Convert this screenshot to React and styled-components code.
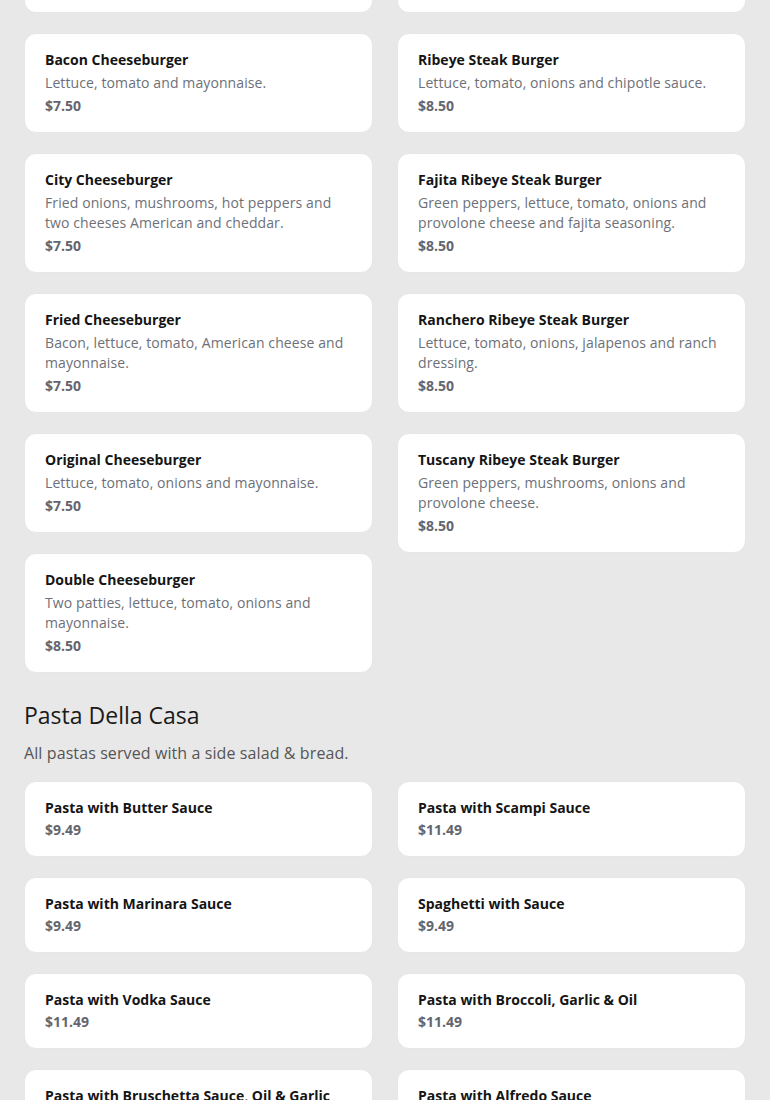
import React from 'react'
import styled, { createGlobalStyle } from 'styled-components'

const GlobalStyle = createGlobalStyle`
  html, body {
    margin: 0;
    padding: 0;
    background: #e8e8e8;
  }
  body {
    font-family: "Open Sans", "Liberation Sans", sans-serif;
    color: #1a1a1a;
  }
`

const Page = styled.div`
  padding: 0 24px 40px;
`

const Section = styled.section`
  margin-bottom: 26px;
`

const Heading = styled.h2`
  margin: 0;
  font-size: 23px;
  line-height: 32px;
  font-weight: 400;
  color: #1a1a1a;
`

const Subtitle = styled.p`
  margin: 10px 0 16px;
  font-size: 16px;
  line-height: 24px;
  letter-spacing: 0.1px;
  color: #555;
`

const Columns = styled.div`
  display: grid;
  grid-template-columns: 1fr 1fr;
  column-gap: 24px;
  align-items: start;
`

const Column = styled.div`
  display: flex;
  flex-direction: column;
  gap: 20px;
`

const Card = styled.div`
  background: #fff;
  border: 1px solid #e6e6e6;
  border-radius: 12px;
  padding: 16px 20px 16px;
  box-sizing: border-box;
`

/* bottom edge of the card above the visible part of the menu */
const CardEdge = styled.div`
  box-sizing: border-box;
  height: 13px;
  background: #fff;
  border: 1px solid #e6e6e6;
  border-top: none;
  border-radius: 0 0 12px 12px;
`

const Title = styled.div`
  font-size: 14px;
  line-height: 20px;
  font-weight: 700;
  color: #151515;
`

const Desc = styled.div`
  margin-top: 3px;
  font-size: 14px;
  line-height: 20px;
  letter-spacing: 0.1px;
  color: #6d7078;
`

const Price = styled.div`
  margin-top: ${p => (p.$tight ? 2 : 3)}px;
  font-size: 14px;
  line-height: 20px;
  font-weight: 700;
  color: #63666e;
`

const burgersLeft = [
  { name: 'Bacon Cheeseburger', desc: 'Lettuce, tomato and mayonnaise.', price: '$7.50' },
  { name: 'City Cheeseburger', desc: 'Fried onions, mushrooms, hot peppers and two cheeses American and cheddar.', price: '$7.50' },
  { name: 'Fried Cheeseburger', desc: 'Bacon, lettuce, tomato, American cheese and mayonnaise.', price: '$7.50' },
  { name: 'Original Cheeseburger', desc: 'Lettuce, tomato, onions and mayonnaise.', price: '$7.50' },
  { name: 'Double Cheeseburger', desc: 'Two patties, lettuce, tomato, onions and mayonnaise.', price: '$8.50' },
]

const burgersRight = [
  { name: 'Ribeye Steak Burger', desc: 'Lettuce, tomato, onions and chipotle sauce.', price: '$8.50' },
  { name: 'Fajita Ribeye Steak Burger', desc: 'Green peppers, lettuce, tomato, onions and provolone cheese and fajita seasoning.', price: '$8.50' },
  { name: 'Ranchero Ribeye Steak Burger', desc: 'Lettuce, tomato, onions, jalapenos and ranch dressing.', price: '$8.50' },
  { name: 'Tuscany Ribeye Steak Burger', desc: 'Green peppers, mushrooms, onions and provolone cheese.', price: '$8.50' },
]

const pastaLeft = [
  { name: 'Pasta with Butter Sauce', price: '$9.49' },
  { name: 'Pasta with Marinara Sauce', price: '$9.49' },
  { name: 'Pasta with Vodka Sauce', price: '$11.49' },
  { name: 'Pasta with Bruschetta Sauce, Oil & Garlic', price: '$11.49' },
]

const pastaRight = [
  { name: 'Pasta with Scampi Sauce', price: '$11.49' },
  { name: 'Spaghetti with Sauce', price: '$9.49' },
  { name: 'Pasta with Broccoli, Garlic & Oil', price: '$11.49' },
  { name: 'Pasta with Alfredo Sauce', price: '$11.49' },
]

const MenuCard = ({ item }) => (
  <Card>
    <Title>{item.name}</Title>
    {item.desc && <Desc>{item.desc}</Desc>}
    <Price $tight={!item.desc}>{item.price}</Price>
  </Card>
)

const App = () => {
  return (
    <>
      <GlobalStyle />
      <Page>
        <Section>
          <Columns>
            <Column>
              <CardEdge />
              {burgersLeft.map(item => <MenuCard key={item.name} item={item} />)}
            </Column>
            <Column>
              <CardEdge />
              {burgersRight.map(item => <MenuCard key={item.name} item={item} />)}
            </Column>
          </Columns>
        </Section>
        <Section>
          <Heading>Pasta Della Casa</Heading>
          <Subtitle>All pastas served with a side salad &amp; bread.</Subtitle>
          <Columns>
            <Column>
              {pastaLeft.map(item => <MenuCard key={item.name} item={item} />)}
            </Column>
            <Column>
              {pastaRight.map(item => <MenuCard key={item.name} item={item} />)}
            </Column>
          </Columns>
        </Section>
      </Page>
    </>
  )
}

export default App
